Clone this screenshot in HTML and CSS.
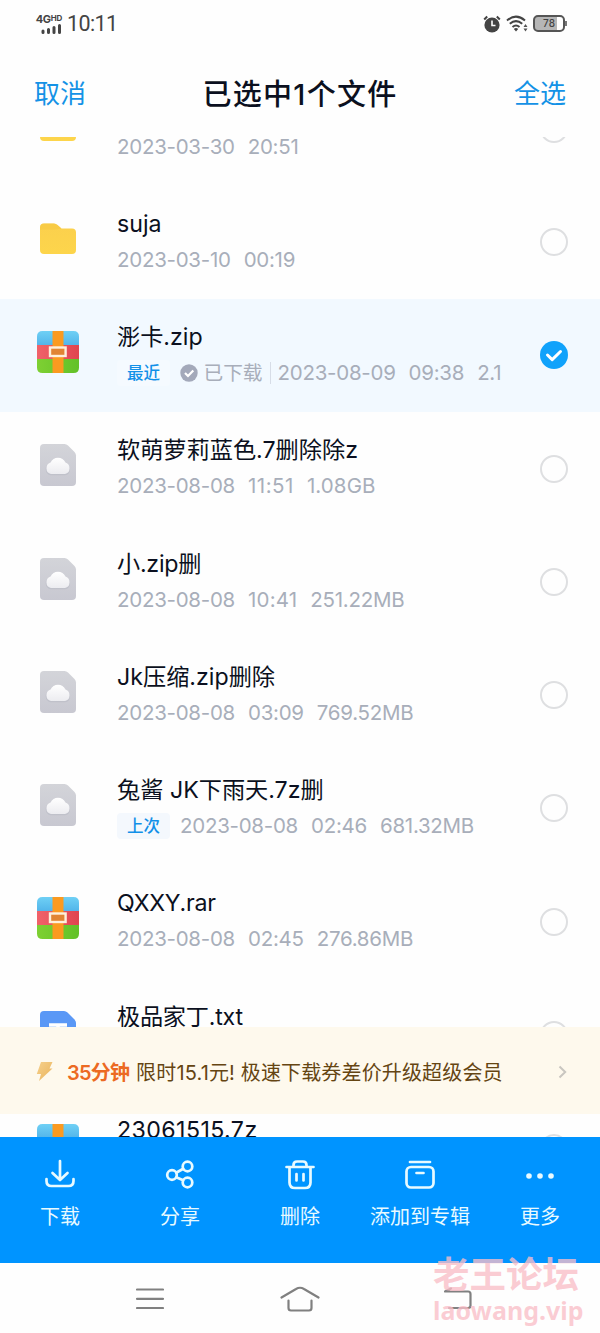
FILE: index.html
```html
<!DOCTYPE html>
<html lang="zh-CN">
<head>
<meta charset="utf-8">
<title>已选中1个文件</title>
<link rel="stylesheet" href="styles.css">
</head>
<body>
<svg class="defs" width="0" height="0">
  <defs>
    <linearGradient id="gy" x1="0" y1="0" x2="0" y2="1"><stop offset="0" stop-color="#fbd04d"/><stop offset="1" stop-color="#fdd54b"/></linearGradient>
    <linearGradient id="gb" x1="0" y1="0" x2="0" y2="1"><stop offset="0" stop-color="#6fd0f5"/><stop offset="1" stop-color="#52b5ea"/></linearGradient>
    <linearGradient id="gr" x1="0" y1="0" x2="1" y2="0"><stop offset="0" stop-color="#f0626a"/><stop offset="1" stop-color="#e0454f"/></linearGradient>
    <linearGradient id="gg" x1="0" y1="0" x2="1" y2="0"><stop offset="0" stop-color="#7ed033"/><stop offset="1" stop-color="#62c128"/></linearGradient>
    <linearGradient id="gd" x1="0" y1="0" x2="0" y2="1"><stop offset="0" stop-color="#d3d4d9"/><stop offset="1" stop-color="#c8c8d1"/></linearGradient>
    <linearGradient id="gc" x1="0" y1="0" x2="0" y2="1"><stop offset="0" stop-color="#ffffff"/><stop offset="1" stop-color="#ececf0"/></linearGradient>
    <linearGradient id="gl" x1="0" y1="0" x2="1" y2="1"><stop offset="0" stop-color="#f6d08c"/><stop offset="1" stop-color="#e9b45c"/></linearGradient>
    <symbol id="folder" viewBox="0 0 42 42"><path d="M3 9.500Q3 5.500 7 5.500H17Q19 5.500 20.500 7L24.500 10.500H35Q39 10.500 39 14.500V32Q39 36 35 36H7Q3 36 3 32Z" fill="url(#gy)"/><path d="M3 12V9.500Q3 5.500 7 5.500H17Q19 5.500 20.500 7L24.500 10.500Q20 11.500 16 11.500H6Q3.500 11.500 3 12Z" fill="#f5c53e" opacity=".5"/></symbol>
    <symbol id="zip" viewBox="0 0 42 42"><path d="M0 14V5.500Q0 0 5.500 0H36.500Q42 0 42 5.500V14Z" fill="url(#gb)"/><path d="M0 14H42V28H0Z" fill="url(#gr)"/><path d="M0 28H42V36.500Q42 42 36.500 42H5.500Q0 42 0 36.500Z" fill="url(#gg)"/><path d="M15.500 0H26.500V42H15.500Z" fill="#fb9a20"/><rect x="13" y="16.500" width="15.600" height="8.500" fill="#e18434" stroke="#fff0dc" stroke-width="2.400"/></symbol>
    <symbol id="cloud" viewBox="0 0 42 42"><path d="M3 4Q3 0 7 0H27.500Q29.500 0 31 1.500L37.500 8Q39 9.500 39 11.500V38Q39 42 35 42H7Q3 42 3 38Z" fill="url(#gd)"/><path d="M14 31.200A6 6 0 0 1 13 19.500A8.300 8.300 0 0 1 28.700 19.500A6 6 0 0 1 28 31.200Z" fill="#b9bac4" opacity=".6"/><path d="M14 30A6 6 0 0 1 13.500 18.500A8.300 8.300 0 0 1 28.500 18.500A6 6 0 0 1 28 30Z" fill="url(#gc)"/></symbol>
    <symbol id="txt" viewBox="0 0 42 42"><path d="M3 4Q3 0 7 0H27Q29 0 30.500 1.500L37.500 8.500Q39 10 39 12V38Q39 42 35 42H7Q3 42 3 38Z" fill="#5a98f6"/><path d="M12 14H30M21 14V31" stroke="#fff" stroke-width="3.600"/></symbol>
  </defs>
</svg>
<div class="screen">
  <header class="status">
    <div class="signal">
      <span class="net">4G<small>HD</small></span>
      <svg width="21" height="10" viewBox="0 0 21 10"><path d="M2 8.500V7M7.500 8.500V5.500M13 8.500V3.500M18.500 8.500V1.500" stroke="#444" stroke-width="3" stroke-linecap="round"/></svg>
    </div>
    <span class="clock">10:11</span>
    <svg class="alarm" width="18" height="18" viewBox="0 0 18 18"><circle cx="9" cy="10" r="7.600" fill="#444"/><path d="M1.200 4.500L4.200 1.500M16.800 4.500L13.800 1.500" stroke="#444" stroke-width="2"/><path d="M9 5.500V10.500H12.500" stroke="#fff" stroke-width="1.600" fill="none"/></svg>
    <svg class="wifi" width="22" height="17" viewBox="0 0 22 17"><path d="M1 5.500Q10 -2.200 19 5.500M3.800 8.800Q10 3.500 16.200 8.800M6.500 12Q10 9 13.500 12" fill="none" stroke="#444" stroke-width="2"/><path d="M7.800 14Q10 12.200 12.200 14L10 16.500Z" fill="#444"/><path d="M19.500 9L21.500 12H17.500ZM19.500 16.500L17.500 13.500H21.500Z" fill="#555"/></svg>
    <div class="battery"><span>78</span></div>
  </header>
  <nav class="titlebar">
    <a>取消</a><h1>已选中1个文件</h1><a>全选</a>
  </nav>
  <main class="list">
    <div class="rows">
      <div class="row"><svg class="ficon"><use href="#folder"/></svg><div class="info"><div class="name">&nbsp;</div><div class="meta"><span>2023-03-30</span><span>20:51</span></div></div><i class="radio"></i></div>
      <div class="row"><svg class="ficon"><use href="#folder"/></svg><div class="info"><div class="name">suja</div><div class="meta"><span>2023-03-10</span><span>00:19</span></div></div><i class="radio"></i></div>
      <div class="row selected"><svg class="ficon"><use href="#zip"/></svg><div class="info"><div class="name">浵卡.zip</div><div class="meta"><b class="tag">最近</b><svg class="done" width="18" height="18" viewBox="0 0 18 18"><circle cx="9" cy="9" r="8.700" fill="#a3a9ba"/><path d="M5 9L8 12L13.300 6.500" fill="none" stroke="#fff" stroke-width="2.200"/></svg><span class="state">已下载</span><span class="from">2023-08-09</span><span>09:38</span><span>2.1</span></div></div><svg class="checked" width="28" height="28" viewBox="0 0 28 28"><circle cx="14" cy="14" r="14" fill="#10a2fb"/><path d="M7.500 14L12.200 18.600L20.500 10.500" fill="none" stroke="#fff" stroke-width="3" stroke-linecap="round" stroke-linejoin="round"/></svg></div>
      <div class="row"><svg class="ficon"><use href="#cloud"/></svg><div class="info"><div class="name">软萌萝莉蓝色.7删除除z</div><div class="meta"><span>2023-08-08</span><span class="wide">11:51</span><span class="wide-size">1.08GB</span></div></div><i class="radio"></i></div>
      <div class="row"><svg class="ficon"><use href="#cloud"/></svg><div class="info"><div class="name tight">小.zip删</div><div class="meta"><span>2023-08-08</span><span class="mid">10:41</span><span>251.22MB</span></div></div><i class="radio"></i></div>
      <div class="row"><svg class="ficon"><use href="#cloud"/></svg><div class="info"><div class="name">Jk压缩.zip删除</div><div class="meta"><span>2023-08-08</span><span>03:09</span><span>769.52MB</span></div></div><i class="radio"></i></div>
      <div class="row"><svg class="ficon"><use href="#cloud"/></svg><div class="info"><div class="name">兔酱 JK下雨天.7z删</div><div class="meta"><b class="tag last">上次</b><span>2023-08-08</span><span>02:46</span><span>681.32MB</span></div></div><i class="radio"></i></div>
      <div class="row"><svg class="ficon"><use href="#zip"/></svg><div class="info"><div class="name tight">QXXY.rar</div><div class="meta"><span>2023-08-08</span><span>02:45</span><span>276.86MB</span></div></div><i class="radio"></i></div>
      <div class="row"><svg class="ficon"><use href="#txt"/></svg><div class="info"><div class="name tight">极品家丁.txt</div></div><i class="radio"></i></div>
      <div class="row"><svg class="ficon"><use href="#zip"/></svg><div class="info"><div class="name long">23061515.7z</div></div><i class="radio"></i></div>
    </div>
    <div class="promo">
      <svg width="18" height="21" viewBox="0 0 18 21"><path d="M5 1H16.500L13.500 7.500H16.500L3 20L5 13H.8Z" fill="url(#gl)"/></svg>
      <strong>35分钟</strong><span>限时15.1元! 极速下载券差价升级超级会员</span>
      <svg class="chev" width="9" height="14" viewBox="0 0 9 14"><path d="M1.500 1.500L7.200 7L1.500 12.500" fill="none" stroke="#c9c6c0" stroke-width="2"/></svg>
    </div>
  </main>
  <section class="actions">
    <div class="act"><svg width="32" height="32" viewBox="0 0 32 32"><path d="M16 2V20M8.500 14L16 21L23.500 14M2.500 20V22Q2.500 27 7.500 27H24.500Q29.500 27 29.500 22V20"/></svg>下载</div>
    <div class="act"><svg width="32" height="32" viewBox="0 0 32 32"><circle cx="8" cy="16" r="4.800"/><circle cx="23.500" cy="7.500" r="4.800"/><circle cx="23.500" cy="23.500" r="4.800"/><path d="M12.200 13.700L19.200 9.800M12.200 18.300L19.200 21.300"/></svg>分享</div>
    <div class="act"><svg width="32" height="32" viewBox="0 0 32 32"><path d="M2.500 8H29.500M9.500 7.500V6Q9.500 2.500 13 2.500H19Q22.500 2.500 22.500 6V7.500M5.500 8.500V23.500Q5.500 29 11 29H21Q26.500 29 26.500 23.500V8.500M12.500 15V21.500M19.500 15V21.500"/></svg>删除</div>
    <div class="act"><svg width="32" height="32" viewBox="0 0 32 32"><path d="M6 3H26M12.500 14H19.500"/><rect x="2.500" y="8" width="27" height="20.500" rx="4.500"/></svg>添加到专辑</div>
    <div class="act"><svg class="dots" width="32" height="32" viewBox="0 0 32 32"><circle cx="5" cy="17" r="2.800"/><circle cx="16" cy="17" r="2.800"/><circle cx="27" cy="17" r="2.800"/></svg>更多</div>
  </section>
  <footer class="sysnav">
    <svg width="28" height="24" viewBox="0 0 28 24"><path d="M1 2.500H27M1 11.800H27M1 21H27"/></svg>
    <svg width="40" height="28" viewBox="0 0 40 28"><path d="M1.500 12.500L16 4Q20 1.500 24 4L38.500 12.500M8.500 15.500V23Q8.500 25.500 11 25.500H29Q31.500 25.500 31.500 23V15.500"/></svg>
    <svg width="28" height="24" viewBox="0 0 28 24"><path d="M7 1.500L1 4.500H24Q26.500 4.500 26.500 7V18.500Q26.500 21 24 21H5"/></svg>
  </footer>
  <div class="mark"><span class="mark-cn">老王论坛</span><span class="mark-url">laowang.vip</span></div>
</div>
</body>
</html>
```
FILE: styles.css
```css
* { box-sizing: border-box; }
body { margin: 0; background: #fff; font-family: Inter, "Noto Sans CJK SC", sans-serif; color: #0b1020; }
svg { display: block; flex: none; }
.defs { position: absolute; }
.screen { position: relative; width: 600px; height: 1333px; display: flex; flex-direction: column; overflow: hidden; background: #fefefe; }

.status { height: 47px; flex: none; display: flex; align-items: center; padding: 0 35px 0 35px; color: #444; }
.signal { width: 27px; display: flex; flex-direction: column; align-items: flex-end; }
.net { font-size: 11px; line-height: 9px; font-weight: 700; white-space: nowrap; letter-spacing: -.3px; }
.net small { font-size: 8px; vertical-align: 2px; }
.clock { flex: 1; margin-left: 5px; font-family: Roboto, sans-serif; font-size: 21.5px; letter-spacing: -.6px; }
.wifi { margin: 0 5px 0 5px; }
.battery { position: relative; width: 32px; height: 17px; border: 2px solid #555; border-radius: 5px; background: linear-gradient(90deg, #b6b6b6 78%, #fff 78%); font-size: 10px; font-weight: 500; line-height: 13px; text-align: center; }
.battery::after { content: ""; position: absolute; right: -4px; top: 4px; width: 2px; height: 5px; background: #777; }

.titlebar { height: 90px; flex: none; display: flex; align-items: center; justify-content: space-between; padding: 0 34px 1px; }
.titlebar a { font-size: 26px; color: #1492e6; }
.titlebar h1 { margin: 0; font-size: 29px; font-weight: 500; letter-spacing: 1.3px; }

.list { height: 1000px; flex: none; overflow: hidden; position: relative; }
.rows { margin-top: -64.5px; }
.row { height: 113.25px; display: flex; align-items: flex-start; padding: 0 32px 0 37px; }
.row.selected { background: #f2f9ff; }
.ficon { width: 42px; height: 42px; margin-top: 32px; }
.info { flex: 1; margin-left: 38px; padding-top: 21px; white-space: nowrap; }
.name { font-size: 23.2px; line-height: 34px; height: 34px; }
.name.long { letter-spacing: .4px; }
.name.tight { letter-spacing: -.25px; }
.meta { display: flex; align-items: center; gap: 13px; height: 26px; margin-top: 6px; font-size: 20.5px; line-height: 26px; letter-spacing: -.27px; color: #a8aeba; font-weight: 400; }
.meta .wide { letter-spacing: .5px; }
.meta .wide-size { letter-spacing: .1px; }
.meta .mid { letter-spacing: .2px; }
.radio { flex: none; width: 28px; height: 28px; margin-top: 42.3px; border: 2px solid #dedfe1; border-radius: 50%; }
.checked { margin-top: 42px; }
.tag { width: 53px; height: 26px; margin-right: -3px; border-radius: 4px; background: #f4f8fd; color: #1290e8; font-size: 16.5px; line-height: 27px; letter-spacing: 0; font-weight: 500; text-align: center; }
.selected .tag { background: #f5faff; margin-right: -3.5px; }
.done { margin-right: -7px; }
.state { margin-right: -6px; font-size: 19.7px; letter-spacing: 0; line-height: 24px; }
.from { border-left: 1px solid #d7dde7; padding-left: 7px; }
.meta .from { line-height: 22px; }

.promo { position: absolute; left: 0; top: 890px; width: 600px; height: 87px; display: flex; align-items: center; padding: 2px 33px 0 36px; background: #fef9ed; font-size: 20px; color: #654512; white-space: nowrap; }
.promo strong { margin: 0 7px 0 13px; color: #ec6a22; font-weight: 600; letter-spacing: -.8px; }
.promo span { letter-spacing: .15px; }
.chev { margin-left: auto; }

.actions { height: 126px; flex: none; display: grid; grid-template-columns: repeat(5, 120px); padding-top: 22px; background: #0094ff; color: #e8faff; font-size: 20px; }
.act { display: flex; flex-direction: column; align-items: center; gap: 10px; line-height: 32px; }
.act svg { fill: none; stroke: #e8faff; stroke-width: 2.7; stroke-linecap: round; stroke-linejoin: round; }
.act .dots { fill: #e8faff; stroke: none; }

.sysnav { flex: 1; display: flex; justify-content: space-between; align-items: center; padding: 1px 128px 0 136px; }
.sysnav svg { fill: none; stroke: #808080; stroke-width: 2.2; stroke-linejoin: round; stroke-linecap: round; }
.sysnav svg:nth-child(2) { margin-right: 8px; }

.mark { position: absolute; left: 433px; top: 1255px; display: flex; flex-direction: column; color: rgba(250, 190, 200, .78); font-weight: 700; white-space: nowrap; }
.mark-cn { font-size: 36.5px; line-height: 41px; }
.mark-url { font-family: "Noto Sans", sans-serif; font-size: 25px; line-height: 28px; }
```
